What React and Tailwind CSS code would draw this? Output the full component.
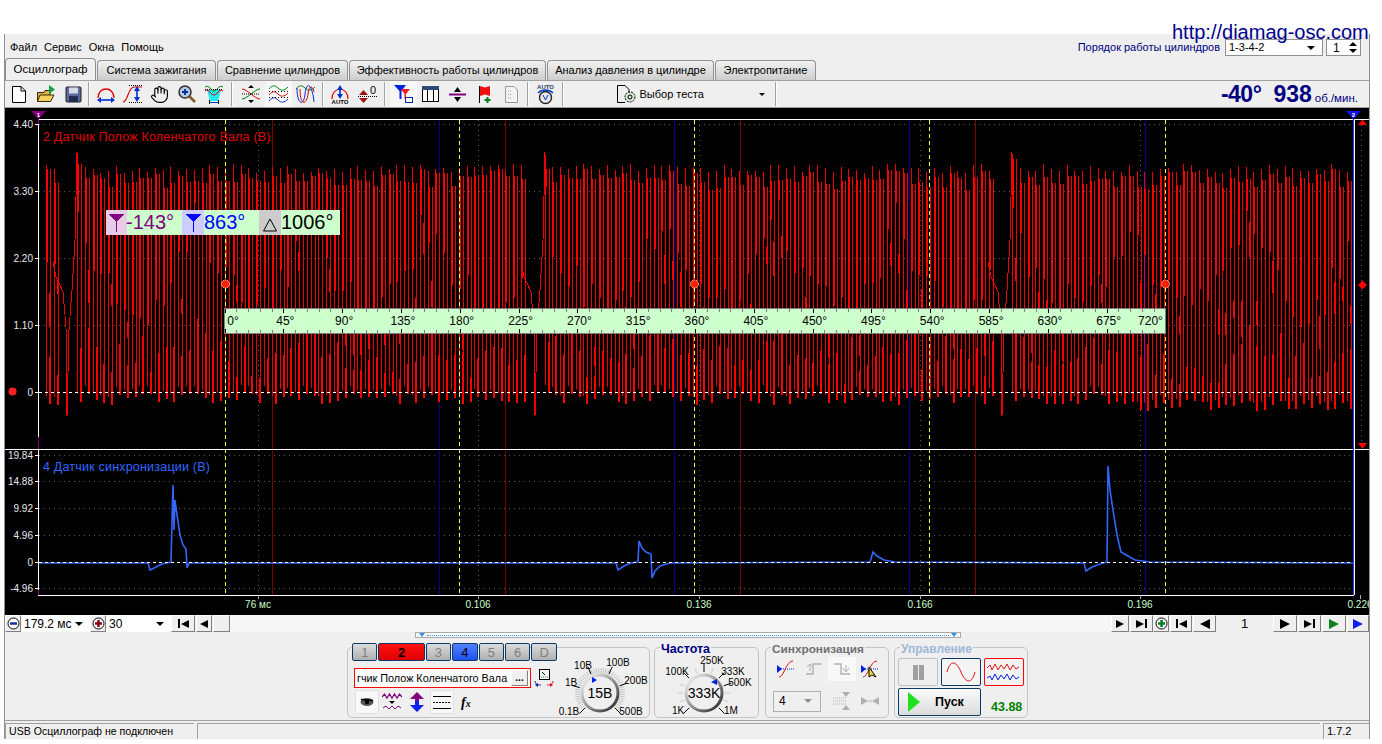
import React from 'react';
import { Hand } from 'lucide-react';

// ---------- chart data ----------
const rnd = (n) => {
  const v = Math.sin(n * 12.9898) * 43758.5453;
  return v - Math.floor(v);
};

const buildTrace = () => {
  let thin = '';
  let thick = '';
  for (let k = -1; k < 3; k++) {
    const start = 77 + 467.5 * k;
    for (let i = 0; i < 58; i++) {
      const x = Math.round(start + i * 7.79);
      if (x < 39 || x > 1350) continue;
      const seed = i + k * 61 + 7;
      const ph = Math.abs(Math.sin((Math.PI * i) / 15));
      const top = Math.round(164 + 9 * rnd(seed) + (i === 0 ? -12 : 0));
      const tail = Math.round(4 + 14 * rnd(seed + 0.15));
      const len = Math.round(30 + 88 * ph + 42 * rnd(seed + 0.3));
      const bottom = Math.round(393 + 12 * rnd(seed + 0.6) + (x > 1100 ? 6 : 0));
      const lowLen = Math.round(18 + 26 * (1 - ph) + 34 * rnd(seed + 0.9));
      thin += `M${x} ${top}V${bottom - 8}M${x + 4} ${top + tail}V${bottom}`;
      thick += `M${x + 1} ${top + tail}V${top + len}M${x + 4} ${bottom - lowLen}V${bottom}`;
      // short heavy piece on the falling edge, the sampling leaves these at random heights
      if (rnd(seed + 1.7) > 0.45) {
        const mid = Math.round(top + len + 8 + 60 * rnd(seed + 2.1));
        const end = Math.min(mid + 14 + Math.round(22 * rnd(seed + 2.6)), bottom - 10);
        thick += `M${x + 4} ${mid}V${end}`;
      }
    }
    const g = [[-24, 262], [-21, 277], [-18, 283], [-14, 292], [-11, 327], [-10, 416], [-8, 330], [-5, 290], [-2, 240], [0, 152]];
    if (start > 70) thin += 'M' + g.map(([dx, y]) => `${Math.round(start + dx)} ${y}`).join('L');
  }
  return { thin, thick };
};
const trace = buildTrace();

const syncTrace = [
  [39, 563], [148, 563], [150, 570], [156, 567], [162, 564], [171, 562], [172, 522], [173, 485], [174, 530], [175, 500], [177, 515], [180, 535], [183, 545], [186, 549], [187, 568], [189, 563],
  [616, 563], [618, 570], [624, 566], [631, 563], [638, 562], [639, 541], [642, 548], [646, 552], [651, 554], [652, 578], [655, 571], [660, 566], [670, 563],
  [870, 562], [873, 552], [877, 556], [884, 560], [895, 562],
  [1084, 563], [1086, 571], [1092, 567], [1100, 564], [1107, 562], [1108, 466], [1110, 490], [1113, 510], [1117, 535], [1121, 552], [1128, 556], [1135, 560], [1150, 562], [1353, 563],
].map(([x, y]) => `${x},${y}`).join(' ');

const axis1 = [['4.40', 124], ['3.30', 191], ['2.20', 258], ['1.10', 325], ['0', 392]];
const axis2 = [['19.84', 455], ['14.88', 481], ['9.92', 508], ['4.96', 535], ['0', 562], ['-4.96', 588]];
const timeLabels = [['76 мс', 258], ['0.106', 478], ['0.136', 699], ['0.166', 920], ['0.196', 1140], ['0.226', 1360]];
const degrees = Array.from({ length: 17 }, (_, i) => i * 45);

const Chart = () => (
  <svg width="1364" height="507" viewBox="5 108 1364 507" className="block bg-black">
    {/* dotted grid */}
    <g stroke="#5a5a5a" strokeDasharray="1 4" shapeRendering="crispEdges">
      {axis1.slice(0, 4).map(([t, y]) => <path key={t} d={`M39 ${y + 0.5}H1353`} />)}
      {axis2.filter(([t]) => t !== '0').map(([t, y]) => <path key={t} d={`M39 ${y + 0.5}H1353`} />)}
      {timeLabels.slice(0, 5).map(([t, x]) => <path key={t} d={`M${x + 0.5} 120V595`} />)}
      <path d="M1361.5 125V445" />
    </g>
    {/* reference lines */}
    <g shapeRendering="crispEdges">
      {[439, 674, 909, 1145].map((x) => <path key={x} d={`M${x + 0.5} 120V595`} stroke="#000090" />)}
      {[272, 505, 740, 975].map((x) => <path key={x} d={`M${x + 0.5} 120V595`} stroke="#7a0000" />)}
    </g>
    <g fill="none" shapeRendering="crispEdges">
      <path d={trace.thin} stroke="#f00000" />
      <path d={trace.thick} stroke="#ff0000" strokeWidth="2" />
    </g>
    <polyline points={syncTrace} fill="none" stroke="#3366ff" strokeWidth="1.6" />
    <g shapeRendering="crispEdges">
      <path d="M39 392.5H1353M39 562.5H1353" stroke="#fff" strokeDasharray="3 3" />
      {[225, 459, 694, 929, 1165].map((x) => <path key={x} d={`M${x + 0.5} 120V595`} stroke="#ffff40" strokeDasharray="4 3" />)}
      {/* frame */}
      <path d="M38 119.5H1369M5 449.5H1369M38 595.5H1354" stroke="#fff" />
      <path d="M38.5 119V595" stroke="#fff" />
      <path d="M38.5 111V124M38.5 437V449M38.5 590V595" stroke="#800080" />
      <path d="M1354.5 119V595" stroke="#fff" />
      <path d="M1353.5 119V595" stroke="#2030ff" />
    </g>
    {/* axis labels */}
    <g fill="#e8e8e8" fontSize="10" textAnchor="end">
      {[...axis1, ...axis2].map(([t, y]) => <text key={t + y} x="33" y={y + 4}>{t}</text>)}
    </g>
    <g stroke="#fff" shapeRendering="crispEdges">
      {[...axis1, ...axis2].map(([t, y]) => <path key={t + y} d={`M35 ${y + 0.5}H38`} />)}
    </g>
    <g fill="#ccffcc" fontSize="10" textAnchor="middle">
      {timeLabels.map(([t, x]) => <text key={t} x={x} y="608">{t}</text>)}
    </g>
    <g stroke="#aaa" shapeRendering="crispEdges">
      {timeLabels.map(([t, x]) => <path key={t} d={`M${x + 0.5} 595V599`} />)}
    </g>
    <text x="43" y="141" fill="#e00000" fontSize="12.5" letterSpacing="0.2">2 Датчик Полож Коленчатого Вала (В)</text>
    <text x="43" y="471" fill="#3366ff" fontSize="12.5" letterSpacing="0.2">4 Датчик синхронизации (В)</text>
    {/* markers */}
    <path d="M31 111H46L38.5 119Z" fill="#800080" />
    <text x="38.5" y="117" fill="#fff" fontSize="6" fontWeight="700" textAnchor="middle">1</text>
    <path d="M1346 111H1361L1353.5 119Z" fill="#1010f0" />
    <text x="1353.5" y="117" fill="#fff" fontSize="6" fontWeight="700" textAnchor="middle">2</text>
    <path d="M1358 125L1362.5 119.5L1367 125Z" fill="#ff0000" />
    <path d="M1362.5 280.5L1367 285L1362.5 289.5L1358 285Z" fill="#ff0000" />
    <path d="M1358 443H1367L1362.5 449Z" fill="#ff0000" />
    <circle cx="12.5" cy="391.5" r="4" fill="#ff2020" />
    {[225, 694, 1165].map((x) => <circle key={x} cx={x + 0.5} cy="284" r="4" fill="#ff2000" stroke="#fff" strokeDasharray="1 1" />)}
    {/* cursor legend */}
    <g shapeRendering="crispEdges">
      <rect x="106" y="210" width="234" height="25" fill="#ccffcc" />
      <rect x="106" y="210" width="21" height="25" fill="#e6cce6" />
      <rect x="182" y="210" width="22" height="25" fill="#ccccff" />
      <rect x="259" y="210" width="22" height="25" fill="#cccccc" />
      <path d="M109 214H124L117 222V232H116V222Z" fill="#800080" />
      <path d="M186 214H201L194 222V232H193V222Z" fill="#0000ff" />
    </g>
    <path d="M270 219L276.5 231H263.5Z" fill="none" stroke="#000" />
    <text x="126" y="229" fill="#800080" fontSize="20">-143°</text>
    <text x="204" y="229" fill="#0000ff" fontSize="20">863°</text>
    <text x="281" y="229" fill="#000" fontSize="20">1006°</text>
    {/* degree ruler */}
    <rect x="224.5" y="308.5" width="941" height="25" fill="#ccffcc" stroke="#808080" shapeRendering="crispEdges" />
    <g shapeRendering="crispEdges">
      {Array.from({ length: 81 }, (_, i) => {
        const x = Math.round(224.5 + (i * 941) / 80) + 0.5;
        const major = i % 5 === 0;
        return <path key={i} d={`M${x} 309V${major ? 313 : 312}M${x} 333V${major ? 329 : 330}`} stroke={major ? '#000' : '#808080'} />;
      })}
    </g>
    <g fill="#000" fontSize="12" textAnchor="middle">
      {degrees.map((d, i) => {
        const x = 224.5 + (i * 941) / 16;
        const adj = i === 0 ? 8.5 : i === 16 ? -15 : 2;
        return <text key={d} x={x + adj} y="325">{d}°</text>;
      })}
    </g>
  </svg>
);

// ---------- toolbar icons ----------
const Ico = ({ w = 20, h = 20, children }) => (
  <svg width={w} height={h} viewBox={`0 0 ${w} ${h}`} fill="none">{children}</svg>
);

const toolIcons = {
  doc: <Ico><path d="M3.5 2.5H12L16.5 7V18.5H3.5Z" fill="#fff" stroke="#000" /><path d="M12 2.5V7H16.5" stroke="#000" /></Ico>,
  open: <Ico><path d="M1.5 8.5H8L9 6.5H14V17.5H1.5Z" fill="#d8b050" stroke="#3a2a00" /><path d="M4 11H18L14.5 17.5H1.5Z" fill="#f4d060" stroke="#3a2a00" /><path d="M13 1L19 5.5L13 10Z" fill="#10a040" /></Ico>,
  save: <Ico><rect x="3" y="3" width="15" height="15" rx="1" fill="#5a6a9a" stroke="#222" /><rect x="6" y="3.5" width="9" height="6" fill="#d8d8e8" /><rect x="6" y="12" width="9" height="6" fill="#222c50" /></Ico>,
  arch: <Ico w={20}><path d="M2 14C2 2 18 2 18 14" stroke="#e00000" strokeWidth="1.3" /><path d="M3 16H17" stroke="#0030d0" strokeWidth="1.6" /><path d="M1 16L5 13V19ZM19 16L15 13V19Z" fill="#0030d0" /></Ico>,
  scurve: <Ico w={22}><path d="M1 18C6 18 6 3 12 3H20" stroke="#e00000" strokeWidth="1.2" /><path d="M7 1.5H20M7 18.5H20" stroke="#000" strokeDasharray="1 1" /><path d="M15 5V15" stroke="#0030d0" strokeWidth="1.6" /><path d="M15 2L18 7H12ZM15 18L18 13H12Z" fill="#0030d0" /></Ico>,
  hand: <Hand size={19} strokeWidth={1.4} color="#000" />,
  zoom: <Ico><circle cx="8" cy="8" r="6" fill="#b8c8e0" stroke="#333" strokeWidth="1.5" /><path d="M5 8H11M8 5V11" stroke="#0030a0" strokeWidth="1.8" /><path d="M12.5 12.5L18 18" stroke="#806020" strokeWidth="2.6" /></Ico>,
  cyan: <Ico><path d="M3 6H17L14 17H6Z" fill="#20e8f0" /><path d="M1 3C6 0 6 7 10 7S14 0 19 3" stroke="#008000" /><path d="M1 7C6 4 6 11 10 11S14 4 19 7" stroke="#e00000" /><path d="M1 5.5H19" stroke="#000" strokeDasharray="1 1" /><path d="M6 18.5H14" stroke="#0030d0" /><path d="M5.5 16V20M14.5 16V20" stroke="#000" /></Ico>,
  cross: <Ico><path d="M1 5C6 5 14 15 19 15" stroke="#e00000" /><path d="M1 15C6 15 14 5 19 5" stroke="#008000" /><path d="M1 10H19" stroke="#000" strokeDasharray="1 1" /><path d="M10 1L13 4H7ZM10 19L13 16H7Z" fill="#000" /></Ico>,
  waves: <Ico w={21}><path d="M1 5C4 1 7 1 10 4S16 7 20 3" stroke="#008000" /><path d="M1 11C4 7 7 7 10 10S16 13 20 9" stroke="#e00000" /><path d="M1 17C4 13 7 13 10 16S16 19 20 15" stroke="#0030d0" /><path d="M1 7.5H20M1 13.5H20" stroke="#000" strokeDasharray="1 2" /></Ico>,
  over: <Ico w={21}><path d="M1 5C4 1 7 1 10 4S16 7 20 3" stroke="#008000" /><path d="M2 4C2 22 9 22 10 10S17 -2 19 18" stroke="#0030d0" /><path d="M5 5C5 24 12 20 13 10S18 2 19 8" stroke="#e00000" /></Ico>,
  auto: <Ico><path d="M2 15C2 2 18 2 18 15" stroke="#e00000" strokeWidth="1.2" /><path d="M10 4V13" stroke="#0030d0" strokeWidth="1.6" /><path d="M10 1L13 6H7ZM10 15L13 10H7Z" fill="#0030d0" /><text x="10" y="20" fontSize="6" fontWeight="700" fill="#000" textAnchor="middle">AUTO</text></Ico>,
  zero: <Ico w={22}><path d="M2 6H11L6.5 11Z" fill="#a01010" transform="rotate(180 6.5 8.5)" /><path d="M2 14H11L6.5 19Z" fill="#a01010" /><path d="M1 12.5H20" stroke="#000" strokeDasharray="1 1" /><text x="16" y="10" fontSize="11" fill="#000" textAnchor="middle">0</text></Ico>,
  funnel: <Ico><path d="M1 1H13L8.5 7V15H6.5V7Z" fill="#0020e0" /><path d="M8 5H17L13 10V15H11.5V10Z" fill="#f02020" /><rect x="12.5" y="13.5" width="7" height="5" fill="#fff" stroke="#0030a0" /></Ico>,
  table: <Ico w={19}><rect x="1.5" y="3.5" width="16" height="14" fill="#fff" stroke="#000" /><rect x="1" y="2" width="17" height="4" fill="#304878" /><path d="M6.5 6V18M12.5 6V18" stroke="#000" /></Ico>,
  split: <Ico w={19}><path d="M1 10.5H18" stroke="#800080" strokeWidth="2" /><path d="M9.5 3L13 8H6ZM9.5 18L13 13H6Z" fill="#000" /></Ico>,
  flag: <Ico w={15}><path d="M2.5 2V19" stroke="#000" /><path d="M3 2L8 3.5L13 2V12L8 10.5L3 12Z" fill="#f01010" /><path d="M10.5 13V19M7.5 16H13.5" stroke="#008020" strokeWidth="2" /></Ico>,
  page: <Ico w={15}><path d="M1.5 2.5H10L13.5 6V18.5H1.5Z" fill="#f4f4f4" stroke="#999" /><path d="M4 7H7M4 10.5H7M4 14H7" stroke="#999" strokeDasharray="1 1" /></Ico>,
  clock: <Ico w={19} h={22}><text x="9.5" y="6" fontSize="6" fontWeight="700" fill="#304060" textAnchor="middle">AUTO</text><path d="M2 10C6 6 13 6 17 10" stroke="#0040d0" strokeWidth="1.4" /><circle cx="9.5" cy="14.5" r="6" fill="#e8e8e8" stroke="#222" strokeWidth="1.4" /><path d="M7 12L9.5 17L12 12" stroke="#0030d0" /></Ico>,
};

const ToolBtn = ({ icon, className = 'w-[27px]', on }) => (
  <div className={`flex h-[26px] items-center justify-center ${className} ${on ? 'bg-[#f8f8f8]' : ''}`}>{toolIcons[icon]}</div>
);

const Sep = ({ className = 'w-[6px]' }) => (
  <div className={`flex h-[24px] justify-center ${className}`}><div className="w-[2px] border-l border-[#a0a0a0] bg-white" /></div>
);

// ---------- bottom strip ----------
const bevel = 'border border-t-white border-l-white border-r-[#808080] border-b-[#808080] bg-[#efefef]';

const Tri = ({ dir = 'r', bar, color = '#000', size = 'sm' }) => {
  const s = size === 'sm' ? 8 : 10;
  const d = dir === 'r' ? `M0 0L${s} ${s / 2}L0 ${s}Z` : `M${s} 0L0 ${s / 2}L${s} ${s}Z`;
  return (
    <span className="flex items-center">
      {bar && dir === 'l' && <span className="mr-[1px] h-[9px] w-[2px] bg-black" />}
      <svg width={s} height={s} viewBox={`0 0 ${s} ${s}`}><path d={d} fill={color} /></svg>
      {bar && dir === 'r' && <span className="ml-[1px] h-[9px] w-[2px] bg-black" />}
    </span>
  );
};

const NavBtn = ({ className, children }) => (
  <div className={`flex h-[17px] items-center justify-center ${bevel} ${className}`}>{children}</div>
);

const RoundBtn = ({ color }) => (
  <div className={`flex h-[17px] w-[16px] items-center justify-center ${bevel}`}>
    <svg width="13" height="13" viewBox="0 0 13 13">
      <circle cx="6.5" cy="6.5" r="5.5" fill="#fff" stroke="#000" />
      <path d="M3 6.5H10" stroke={color} strokeWidth="2.5" />
      {color !== '#1030a0' && <path d="M6.5 3V10" stroke={color} strokeWidth="2.5" />}
    </svg>
  </div>
);

const Caret = () => <span className="h-0 w-0 border-x-[4px] border-t-[4px] border-x-transparent border-t-black" />;

const ScrollRow = () => (
  <div className="flex h-[17px] items-stretch text-[12px]">
    <RoundBtn color="#1030a0" />
    <div className="flex w-[69px] items-center justify-between bg-white pl-[3px] pr-[7px]"><span>179.2 мс</span><Caret /></div>
    <RoundBtn color="#900010" />
    <div className="flex w-[65px] items-center justify-between bg-white pl-[3px] pr-[7px]"><span>30</span><Caret /></div>
    <NavBtn className="w-[24px]"><Tri dir="l" bar /></NavBtn>
    <NavBtn className="ml-[1px] w-[16px]"><Tri dir="l" /></NavBtn>
    <NavBtn className="ml-[1px] w-[17px]" />
    <div className="flex-1 bg-[repeating-conic-gradient(#ffffff_0_25%,#efefef_0_50%)] bg-[length:2px_2px]" />
    <NavBtn className="w-[18px]"><Tri /></NavBtn>
    <NavBtn className="ml-[1px] w-[23px]"><Tri bar /></NavBtn>
    <RoundBtn color="#008020" />
    <NavBtn className="ml-[1px] w-[22px]"><Tri dir="l" bar /></NavBtn>
    <NavBtn className="ml-[1px] w-[23px]"><Tri dir="l" size="lg" /></NavBtn>
    <div className="flex w-[57px] items-center justify-center text-[13px]">1</div>
    <NavBtn className="w-[24px]"><Tri size="lg" /></NavBtn>
    <NavBtn className="ml-[1px] w-[23px]"><Tri bar /></NavBtn>
    <NavBtn className="ml-[1px] w-[24px]"><Tri color="#108020" size="lg" /></NavBtn>
    <NavBtn className="ml-[1px] w-[22px]"><Tri color="#1020f0" size="lg" /></NavBtn>
  </div>
);

// ---------- control groups ----------
const channels = [
  { t: '1', c: 'w-[26px] bg-gradient-to-b from-[#dcdcdc] to-[#b0b0b0] text-[#808080]' },
  { t: '2', c: 'w-[47px] bg-gradient-to-b from-[#ff1010] to-[#e00000] text-black font-bold' },
  { t: '3', c: 'w-[26px] bg-gradient-to-b from-[#dcdcdc] to-[#b0b0b0] text-[#808080]' },
  { t: '4', c: 'w-[26px] bg-gradient-to-b from-[#5080ff] to-[#2050f0] text-black' },
  { t: '5', c: 'w-[26px] bg-gradient-to-b from-[#dcdcdc] to-[#b0b0b0] text-[#808080]' },
  { t: '6', c: 'w-[26px] bg-gradient-to-b from-[#dcdcdc] to-[#b0b0b0] text-[#808080]' },
  { t: 'D', c: 'w-[26px] bg-gradient-to-b from-[#dcdcdc] to-[#b0b0b0] text-[#808080]' },
];

const Knob = ({ label, labels, pointer, hatch, major, cx }) => {
  const cy = 45;
  const ticks = [-110, -90, -70, -20, 20, 90, 110];
  const spoke = (deg, r1, r2) => {
    const a = (deg * Math.PI) / 180;
    return `M${cx + Math.sin(a) * r1} ${cy - Math.cos(a) * r1}L${cx + Math.sin(a) * r2} ${cy - Math.cos(a) * r2}`;
  };
  return (
    <svg width="90" height="71" viewBox="0 0 90 71" className="block shrink-0 overflow-visible">
      <defs>
        <linearGradient id={`ring${cx}`} x1="0" y1="0" x2="1" y2="1">
          <stop offset="0.1" stopColor="#e8e8e8" />
          <stop offset="0.6" stopColor="#808080" />
          <stop offset="1" stopColor="#202020" />
        </linearGradient>
      </defs>
      {hatch && Array.from({ length: 46 }, (_, i) => <path key={i} d={spoke(-135 + i * 6, 20, 25)} stroke="#c0c0c0" />)}
      {!hatch && ticks.map((t) => <path key={t} d={spoke(t, 21, 26)} stroke="#c8c8c8" />)}
      {major.map((t) => <path key={t} d={spoke(t, 21, 29)} stroke="#000" />)}
      <circle cx={cx} cy={cy} r="18" fill="#efefef" stroke={`url(#ring${cx})`} strokeWidth="3" />
      <path d={pointer} fill="#0020e0" />
      <text x={cx} y={cy + 5} fontSize="14" textAnchor="middle" fill="#000">{label}</text>
      {labels.map(([t, x, y]) => <text key={t} x={x} y={y} fontSize="10" textAnchor="middle" fill="#000">{t}</text>)}
    </svg>
  );
};

const Group = ({ title, titleClass, className, children }) => (
  <div className={`relative h-[71px] rounded-[5px] border border-[#c4c4c4] ${className}`}>
    {title && <div className={`absolute -top-[6px] left-[5px] bg-[#efefef] px-[1px] font-bold leading-[14px] ${titleClass}`}>{title}</div>}
    {children}
  </div>
);

const SyncIcon = ({ children, on }) => (
  <div className={`flex h-[24px] w-[28px] items-center justify-center ${on ? 'bg-[#f8f8f8]' : ''}`}>
    <svg width="20" height="20" viewBox="0 0 20 20" fill="none">{children}</svg>
  </div>
);

const ControlPanel = () => (
  <div className="flex h-[89px] flex-col border-b border-[#a0a0a0]">
    <div className="ml-[410px] flex h-[6px] w-[546px] items-center border border-[#a8a8a8] bg-white">
      <span className="ml-[3px] h-0 w-0 border-x-[3px] border-t-[4px] border-x-transparent border-t-[#3090f0]" />
      <span className="mx-[2px] h-0 flex-1 border-t border-dotted border-[#3090f0]" />
      <span className="mr-[3px] h-0 w-0 border-x-[3px] border-t-[4px] border-x-transparent border-t-[#3090f0]" />
    </div>
    <div className="ml-[342px] mt-[9px] flex gap-[4px]">
      {/* channel group */}
      <Group className="flex w-[303px]">
        <div className="w-[209px] shrink-0">
          <div className="-mt-[5px] ml-[4px] flex gap-[1px]">
            {channels.map((ch) => (
              <div key={ch.t} className={`flex h-[18px] items-center justify-center rounded-[2px] border border-[#0a3a68] text-[13px] leading-none ${ch.c}`}>{ch.t}</div>
            ))}
          </div>
          <div className="mt-[7px] flex items-center pl-[6px]">
            <div className="flex h-[20px] w-[177px] items-center overflow-hidden border border-[#ff0000] bg-white pl-[1px] pr-[2px] text-[10.8px]">
              <span className="w-[155px] overflow-hidden whitespace-nowrap pl-[1px]">гчик Полож Коленчатого Вала</span>
              <span className={`flex h-[16px] w-[17px] items-center justify-center text-[10px] font-bold leading-none ${bevel}`}>...</span>
            </div>
            <svg width="20" height="20" viewBox="0 0 20 20" fill="none" className="ml-[3px]">
              <rect x="5.5" y="1.5" width="10" height="10" fill="#f4f4f4" stroke="#000" />
              <path d="M7 9H14" stroke="#109020" strokeDasharray="1 1" /><path d="M8 4L11 7" stroke="#000" />
              <path d="M1 13C1 17 5 17 7 17" stroke="#1020a0" /><path d="M19 13C19 17 15 17 13 17" stroke="#e01010" />
              <path d="M4 15V19L1 17Z" fill="#1020a0" /><path d="M16 15V19L19 17Z" fill="#e01010" />
            </svg>
          </div>
          <div className="mt-[2px] flex items-center pl-[7px]">
            <div className="flex h-[24px] w-[24px] items-center justify-center border border-[#e0e0e0] bg-[#f8f8f8]">
              <svg width="14" height="10" viewBox="0 0 14 10"><ellipse cx="7" cy="5" rx="6.5" ry="4" fill="#555" /><circle cx="7" cy="5" r="2.2" fill="#000" /><path d="M1 2.5L13 3.5" stroke="#000" strokeWidth="1.5" /></svg>
            </div>
            <svg width="20" height="20" viewBox="0 0 20 20" fill="none" className="ml-[3px]">
              <path d="M0 5L2.5 2L5 6L7.5 2L10 6L12.5 2L15 6L17.5 2L20 5" stroke="#800080" strokeWidth="1.2" />
              <path d="M7 9H13L10 12Z" fill="#000" /><path d="M1 16L4 14L7 17L10 14L13 17L16 14L19 16" stroke="#800080" />
            </svg>
            <svg width="16" height="22" viewBox="0 0 16 22" className="ml-[7px]">
              <path d="M8 1L15 8H10V12H6V8H1Z" fill="#800080" /><path d="M8 21L15 14H10V10H6V14H1Z" fill="#1020f0" />
            </svg>
            <div className="ml-[5px] flex h-[24px] w-[24px] flex-col justify-center gap-[5px] border border-[#e0e0e0] bg-[#f8f8f8] px-[2px]">
              <div className="h-[1px] bg-black" /><div className="h-[1px] bg-[repeating-linear-gradient(90deg,#000_0_2px,transparent_2px_3px)]" /><div className="h-[1px] bg-black" />
            </div>
            <span className="ml-[7px] text-[14px] font-bold italic [font-family:'Liberation_Serif',serif]">f<span className="text-[10px]">x</span></span>
          </div>
        </div>
        <Knob label="15В" cx={43} hatch major={[-135, -75, -25, 25, 70, 135]} pointer="M35 29L35 35L40 32Z" labels={[['10В', 26, 21], ['100В', 61, 18], ['1В', 14, 38], ['200В', 79, 36], ['0.1В', 12, 67], ['500В', 74, 67]]} />
      </Group>
      {/* frequency */}
      <Group title="Частота" titleClass="text-[#000080] text-[12.5px]" className="w-[105px]">
        <Knob label="333K" cx={49} major={[-135, -45, 0, 45, 70, 135]} pointer="M62 31L62 37L56 34Z" labels={[['250K', 57, 16], ['100K', 22, 27], ['333K', 78, 27], ['500K', 85, 38], ['1K', 23, 66], ['1M', 76, 66]]} />
      </Group>
      {/* sync */}
      <Group title="Синхронизация" titleClass="text-[#707070] text-[11.8px]" className="ml-[2px] w-[124px]">
        <div className="ml-[6px] mt-[9px] flex">
          <SyncIcon><path d="M1 10H18" stroke="#0020e0" strokeDasharray="1 1" /><path d="M1 6V14L6 10Z" fill="#0020e0" /><path d="M3 18C8 18 10 2 17 2" stroke="#e01010" /></SyncIcon>
          <SyncIcon><path d="M2 15H9V5H18" stroke="#b0b0b0" strokeWidth="1.4" /><path d="M6 12V6M3 8L6 5L9 8" stroke="#b0b0b0" /></SyncIcon>
          <SyncIcon on><path d="M2 5H9V15H18" stroke="#b0b0b0" strokeWidth="1.4" /><path d="M14 6V12M11 9L14 13L17 9" stroke="#b0b0b0" /></SyncIcon>
          <SyncIcon><path d="M1 10H18" stroke="#0020e0" strokeDasharray="1 1" /><path d="M1 6V14L6 10Z" fill="#0020e0" /><path d="M3 18C8 18 10 2 17 2" stroke="#e01010" /><path d="M9 8L9 18L12 16L16 18Z" fill="#ffe020" stroke="#000" /></SyncIcon>
        </div>
        <div className="mt-[8px] flex items-center">
          <div className="ml-[7px] flex h-[21px] w-[48px] items-center justify-between border border-[#b0b0b0] pl-[5px] pr-[8px] text-[12px]"><span>4</span><span className="h-0 w-0 border-x-[4px] border-t-[4px] border-x-transparent border-t-[#909090]" /></div>
          <div className="ml-[7px] flex">
            <SyncIcon><path d="M1 7H14M1 10H14M1 13H14" stroke="#b0b0b0" strokeDasharray="1 1" /><path d="M10 1H18L14 6ZM10 19H18L14 14Z" fill="#b0b0b0" /></SyncIcon>
            <SyncIcon><path d="M1 6L8 10L1 14ZM19 6L12 10L19 14Z" fill="#b0b0b0" /><path d="M8 10H12" stroke="#b0b0b0" /></SyncIcon>
          </div>
        </div>
      </Group>
      {/* run control */}
      <Group title="Управление" titleClass="text-[#a0b8d8] text-[12px]" className="ml-[1px] w-[134px]">
        <div className="ml-[3px] mt-[10px] flex gap-[3px]">
          <div className="flex h-[28px] w-[40px] items-center justify-center gap-[1px] rounded-[2px] border border-[#c0c0c0] bg-[#efefef]">
            <span className="h-[15px] w-[5px] bg-[#a0a0a0]" /><span className="h-[15px] w-[5px] bg-[#a0a0a0]" />
          </div>
          <div className="flex h-[28px] w-[40px] items-center justify-center rounded-[2px] border border-[#0a3a68] bg-[#f4f4f4]">
            <svg width="30" height="20" viewBox="0 0 30 20" fill="none"><path d="M1 10C4 -2 10 -2 15 10S26 22 29 10" stroke="#e01010" /></svg>
          </div>
          <div className="flex h-[28px] w-[40px] items-center justify-center rounded-[2px] border border-[#ff0000] bg-[#f4f4f4]">
            <svg width="36" height="22" viewBox="0 0 36 22" fill="none">
              <path d="M1 7L4 4L6 9L9 3L12 9L15 4L18 8L21 3L24 9L27 4L30 8L33 6" stroke="#e01010" /><path d="M1 17L4 15L6 19L9 13L12 19L15 14L18 18L21 13L24 19L27 14L30 18L33 16" stroke="#0020e0" />
            </svg>
          </div>
        </div>
        <div className="ml-[3px] mt-[2px] flex">
          <div className="flex h-[28px] w-[83px] items-center rounded-[2px] border border-[#0a3a68] bg-gradient-to-b from-[#fafafa] to-[#dcdcdc] pl-[9px] text-[12.5px] font-bold">
            <svg width="12" height="20" viewBox="0 0 12 20"><path d="M0 0L12 10L0 20Z" fill="#20e020" /></svg>
            <span className="ml-[15px]">Пуск</span>
          </div>
          <span className="ml-[10px] mt-[13px] text-[12.5px] font-bold leading-none text-[#008000]">43.88</span>
        </div>
      </Group>
    </div>
  </div>
);

const tabs = [
  ['Система зажигания', 'w-[119px]'],
  ['Сравнение цилиндров', 'w-[131px]'],
  ['Эффективность работы цилиндров', 'w-[197px]'],
  ['Анализ давления в цилиндре', 'w-[167px]'],
  ['Электропитание', 'w-[101px]'],
];

export default function App() {
  return (
    <div className="relative h-[744px] w-[1382px] overflow-hidden bg-white pl-[4px] pt-[34px] text-[11px] text-black [font-family:'Liberation_Sans',sans-serif]">
      <div className="absolute left-[1172px] top-[20px] whitespace-nowrap text-[20px] leading-[24px] text-[#000090]">http://diamag-osc.com</div>

      <div className="h-[705px] w-[1366px] border-x border-[#909090] bg-[#efefef]">
        {/* menu */}
        <div className="flex h-[24px] items-center pl-[5px] pt-[3px]">
          <div className="flex gap-[7px]"><span>Файл</span><span>Сервис</span><span>Окна</span><span>Помощь</span></div>
          <div className="ml-auto flex items-center pr-[8px]">
            <span className="mr-[5px] text-[#000080]">Порядок работы цилиндров</span>
            <div className="flex h-[17px] w-[98px] items-center justify-between border border-[#909090] bg-white pl-[3px] pr-[7px]"><span>1-3-4-2</span><Caret /></div>
            <div className="ml-[3px] flex h-[17px] w-[35px] items-center justify-between border border-[#909090] bg-white pl-[6px] pr-[3px] text-[12px]">
              <span>1</span>
              <span className="flex flex-col gap-[3px]"><span className="block h-0 w-0 border-x-[4px] border-b-[4px] border-x-transparent border-b-black" /><Caret /></span>
            </div>
          </div>
        </div>

        {/* tabs */}
        <div className="flex h-[22px] items-end">
          <div className="flex h-[22px] w-[91px] items-center justify-center rounded-t-[4px] border border-b-0 border-[#909090] bg-[#efefef] text-[11.5px]">Осциллограф</div>
          {tabs.map(([t, w]) => (
            <div key={t} className={`ml-[1px] flex h-[20px] items-center justify-center rounded-t-[4px] border border-b-0 border-[#909090] bg-gradient-to-b from-[#f2f2f2] to-[#cdcdcd] ${w}`}>{t}</div>
          ))}
        </div>

        {/* toolbar */}
        <div className="flex h-[28px] items-center border-y border-[#a0a0a0] bg-[#efefef]">
          <ToolBtn icon="doc" /><ToolBtn icon="open" /><ToolBtn icon="save" />
          <Sep />
          <ToolBtn icon="arch" /><ToolBtn icon="scurve" /><ToolBtn icon="hand" /><ToolBtn icon="zoom" /><ToolBtn icon="cyan" />
          <Sep className="w-[10px]" />
          <ToolBtn icon="cross" className="w-[27.5px]" /><ToolBtn icon="waves" className="w-[27.5px]" on /><ToolBtn icon="over" className="w-[27.5px]" />
          <Sep />
          <ToolBtn icon="auto" className="w-[28px]" /><ToolBtn icon="zero" className="w-[28px]" />
          <Sep />
          <div className="w-[2px]" />
          <ToolBtn icon="funnel" on /><ToolBtn icon="table" /><ToolBtn icon="split" /><ToolBtn icon="flag" /><ToolBtn icon="page" />
          <Sep />
          <ToolBtn icon="clock" className="w-[29px]" />
          <Sep />
          <div className="flex w-[207px] items-center pl-[50px] pr-[8px]">
            <svg width="21" height="20" viewBox="0 0 21 20" fill="none"><path d="M1.5 1.5H9L13 5.5V12M9 18.5H1.5V1.5" stroke="#000" /><circle cx="14" cy="13" r="5" fill="#d8e8d8" stroke="#000" strokeDasharray="2 1" /><circle cx="14" cy="13" r="2" stroke="#000" /></svg>
            <span className="ml-[3px]">Выбор теста</span>
            <span className="ml-auto h-0 w-0 border-x-[3px] border-t-[3px] border-x-transparent border-t-black" />
          </div>
          <Sep />
          <div className="ml-auto flex items-baseline pr-[11px] pt-[1px] text-[#000080]">
            <span className="text-[23px] font-bold leading-none tracking-[-0.5px]">-40°</span>
            <span className="ml-[12px] text-[23px] font-bold leading-none">938</span>
            <span className="ml-[3px] text-[11.5px] leading-none">об./мин.</span>
          </div>
        </div>

        <Chart />
        <ScrollRow />
        <ControlPanel />

        {/* status bar */}
        <div className="mt-[2px] flex h-[16px] gap-[3px]">
          <div className="flex w-[189px] items-center border-l border-t border-[#a0a0a0] pl-[3px] text-[10.6px]">USB Осциллограф не подключен</div>
          <div className="flex-1 border-l border-t border-[#a0a0a0]" />
          <div className="flex w-[46px] items-center border-l border-t border-[#a0a0a0] pl-[3px]">1.7.2</div>
        </div>
      </div>
    </div>
  );
}
